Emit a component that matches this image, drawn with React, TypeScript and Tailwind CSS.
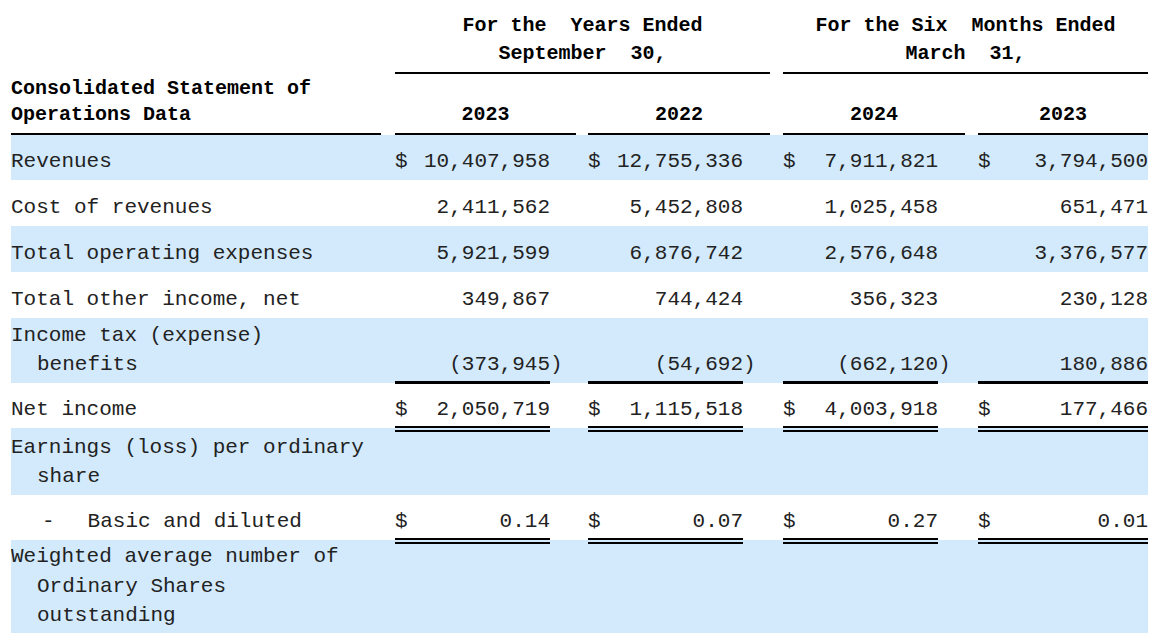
import React from 'react';

const mono = { fontFamily: '"Liberation Mono", "DejaVu Sans Mono", monospace' };

type Cell = { d?: boolean; v?: string; paren?: boolean };

type RowData = {
  label: string[];
  cells?: Cell[];
  blue: boolean;
  h: string;
  line?: 'single' | 'double';
};

const rows: RowData[] = [
  {
    label: ['Revenues'],
    blue: true,
    h: 'h-[45px]',
    cells: [
      { d: true, v: '10,407,958' },
      { d: true, v: '12,755,336' },
      { d: true, v: '7,911,821' },
      { d: true, v: '3,794,500' },
    ],
  },
  {
    label: ['Cost of revenues'],
    blue: false,
    h: 'h-[46px]',
    cells: [{ v: '2,411,562' }, { v: '5,452,808' }, { v: '1,025,458' }, { v: '651,471' }],
  },
  {
    label: ['Total operating expenses'],
    blue: true,
    h: 'h-[46px]',
    cells: [{ v: '5,921,599' }, { v: '6,876,742' }, { v: '2,576,648' }, { v: '3,376,577' }],
  },
  {
    label: ['Total other income, net'],
    blue: false,
    h: 'h-[46px]',
    cells: [{ v: '349,867' }, { v: '744,424' }, { v: '356,323' }, { v: '230,128' }],
  },
  {
    label: ['Income tax (expense)', 'benefits'],
    blue: true,
    h: 'h-[65px]',
    line: 'single',
    cells: [
      { v: '(373,945', paren: true },
      { v: '(54,692', paren: true },
      { v: '(662,120', paren: true },
      { v: '180,886' },
    ],
  },
  {
    label: ['Net income'],
    blue: false,
    h: 'h-[45px]',
    line: 'double',
    cells: [
      { d: true, v: '2,050,719' },
      { d: true, v: '1,115,518' },
      { d: true, v: '4,003,918' },
      { d: true, v: '177,466' },
    ],
  },
  {
    label: ['Earnings (loss) per ordinary', 'share'],
    blue: true,
    h: 'h-[67px]',
  },
];

// gap before each value column, width of its number part and of its paren part
const cols = [
  { ml: 'ml-[14px]', w: 'w-[155px]', p: 'w-[26px]' },
  { ml: 'ml-[12px]', w: 'w-[155px]', p: 'w-[27px]' },
  { ml: 'ml-[13px]', w: 'w-[155px]', p: 'w-[27px]' },
  { ml: 'ml-[13px]', w: 'w-[170px]', p: '' },
];

function ValueCell({ cell, i, line }: { cell?: Cell; i: number; line?: 'single' | 'double' }) {
  const c = cols[i];
  return (
    <div className={`flex shrink-0 items-end ${c.ml}`}>
      <div className={`relative flex ${c.w} items-end justify-between pb-[4px] text-[21px] leading-[29px] text-[#222]`}>
        <span>{cell?.d ? '$' : ''}</span>
        <span>{cell?.v ?? ''}</span>
        {line === 'single' && <div className="absolute bottom-[-1px] left-0 right-0 h-[3px] bg-black" />}
        {line === 'double' && (
          <div className="absolute bottom-[-4px] left-0 right-0 z-10 h-[6px] border-y-2 border-black" />
        )}
      </div>
      {c.p && (
        <div className={`${c.p} pb-[4px] text-[21px] leading-[29px] text-[#222]`}>{cell?.paren ? ')' : ''}</div>
      )}
    </div>
  );
}

function Row({ r }: { r: RowData }) {
  return (
    <div className={`flex items-end ${r.h} ${r.blue ? 'bg-[#d2eafc]' : 'bg-white'}`}>
      <div className="w-[370px] shrink-0 pb-[4px] text-[21px] leading-[29px] text-[#222]">
        {r.label.map((l, k) => (
          <div key={k} className={k > 0 ? 'pl-[26px]' : ''}>
            {l}
          </div>
        ))}
      </div>
      {[0, 1, 2, 3].map((i) => (
        <ValueCell key={i} i={i} cell={r.cells?.[i]} line={r.line} />
      ))}
    </div>
  );
}

export default function App() {
  return (
    <div className="h-[633px] w-[1156px] overflow-hidden bg-white" style={mono}>
      <div className="ml-[11px] w-[1137px]">
        {/* Header */}
        <div className="flex items-end text-[20px] font-bold text-black">
          <div className="w-[370px] shrink-0 border-b-2 border-black pb-[5px] leading-[26px]">
            <div>Consolidated Statement of</div>
            <div>Operations Data</div>
          </div>

          <div className="ml-[14px] w-[375px] shrink-0">
            <div className="whitespace-pre border-b-2 border-black pb-[4px] pt-[12px] text-center leading-[28px]">
              <div>For the  Years Ended</div>
              <div>September  30,</div>
            </div>
            <div className="mt-[28px] flex">
              <div className="w-[181px] border-b-2 border-black pb-[5px] text-center leading-[26px]">2023</div>
              <div className="ml-[12px] w-[182px] border-b-2 border-black pb-[5px] text-center leading-[26px]">2022</div>
            </div>
          </div>

          <div className="ml-[13px] w-[365px] shrink-0">
            <div className="whitespace-pre border-b-2 border-black pb-[4px] pt-[12px] text-center leading-[28px]">
              <div>For the Six  Months Ended</div>
              <div>March  31,</div>
            </div>
            <div className="mt-[28px] flex">
              <div className="w-[182px] border-b-2 border-black pb-[5px] text-center leading-[26px]">2024</div>
              <div className="ml-[13px] w-[170px] border-b-2 border-black pb-[5px] text-center leading-[26px]">2023</div>
            </div>
          </div>
        </div>

        {/* Body */}
        {rows.map((r, k) => (
          <Row key={k} r={r} />
        ))}

        {/* Basic and diluted */}
        <div className="flex h-[45px] items-end bg-white">
          <div className="flex w-[370px] shrink-0 pb-[4px] text-[21px] leading-[29px] text-[#222]">
            <span className="pl-[31px]">-</span>
            <span className="pl-[33px]">Basic and diluted</span>
          </div>
          {['0.14', '0.07', '0.27', '0.01'].map((v, i) => (
            <ValueCell key={i} i={i} cell={{ d: true, v }} line="double" />
          ))}
        </div>

        {/* Weighted average */}
        <div className="h-[110px] bg-[#d2eafc] pt-[2px] text-[21px] leading-[29.5px] text-[#222]">
          <div>Weighted average number of</div>
          <div className="pl-[26px]">Ordinary Shares</div>
          <div className="pl-[26px]">outstanding</div>
        </div>
      </div>
    </div>
  );
}
